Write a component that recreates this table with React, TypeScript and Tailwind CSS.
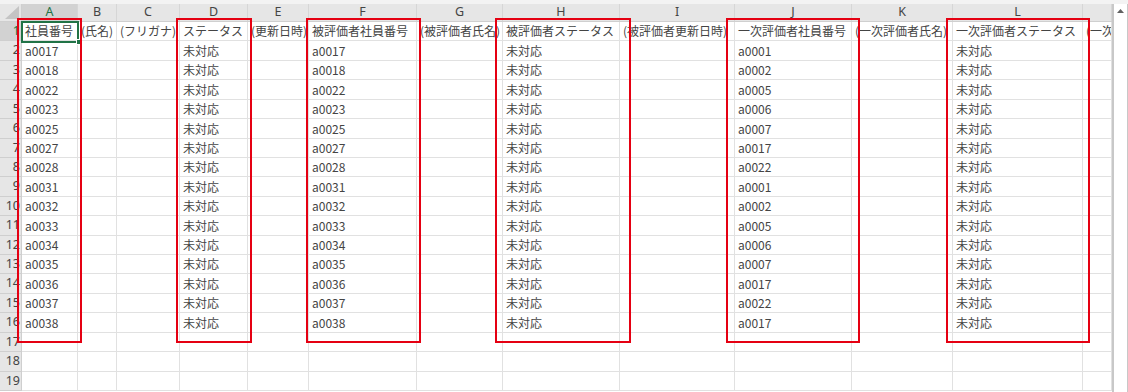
import React from "react";

type Col = { letter: string; label: string; w: string };

const COLS: Col[] = [
  { letter: "A", label: "A", w: "w-[56px]" },
  { letter: "B", label: "B", w: "w-[39px]" },
  { letter: "C", label: "C", w: "w-[63px]" },
  { letter: "D", label: "D", w: "w-[68px]" },
  { letter: "E", label: "E", w: "w-[61px]" },
  { letter: "F", label: "F", w: "w-[108px]" },
  { letter: "G", label: "G", w: "w-[86px]" },
  { letter: "H", label: "H", w: "w-[117px]" },
  { letter: "I", label: "I", w: "w-[115px]" },
  { letter: "J", label: "J", w: "w-[117px]" },
  { letter: "K", label: "K", w: "w-[101px]" },
  { letter: "L", label: "L", w: "w-[130px]" },
  { letter: "M", label: "", w: "flex-1" },
];

const ROW_H = [
  "h-[19px]", "h-[20px]", "h-[19px]", "h-[20px]", "h-[19px]",
  "h-[20px]", "h-[19px]", "h-[19px]", "h-[20px]", "h-[19px]",
  "h-[20px]", "h-[19px]", "h-[19px]", "h-[20px]", "h-[19px]",
  "h-[20px]", "h-[19px]", "h-[20px]", "h-[19px]",
];

const HEADER = [
  "社員番号",
  "(氏名)",
  "(フリガナ)",
  "ステータス",
  "(更新日時)",
  "被評価者社員番号",
  "(被評価者氏名)",
  "被評価者ステータス",
  "(被評価者更新日時)",
  "一次評価者社員番号",
  "(一次評価者氏名)",
  "一次評価者ステータス",
  "(一次評価者更新日時)",
];

const EMP = [
  "a0017", "a0018", "a0022", "a0023", "a0025", "a0027", "a0028", "a0031",
  "a0032", "a0033", "a0034", "a0035", "a0036", "a0037", "a0038",
];
const FIRST = [
  "a0001", "a0002", "a0005", "a0006", "a0007", "a0017", "a0022", "a0001",
  "a0002", "a0005", "a0006", "a0007", "a0017", "a0022", "a0017",
];

function rowData(r: number): string[] {
  if (r === 0) return HEADER;
  if (r <= 15) {
    const i = r - 1;
    return [
      EMP[i], "", "", "未対応", "", EMP[i], "", "未対応", "", FIRST[i], "", "未対応", "",
    ];
  }
  return Array(13).fill("");
}

const BOXES = [
  "left-[17px] w-[65px]",
  "left-[176px] w-[76px]",
  "left-[306px] w-[115px]",
  "left-[495px] w-[136px]",
  "left-[726px] w-[134px]",
  "left-[946px] w-[144px]",
];

export default function App() {
  return (
    <div
      className="relative w-[1128px] h-[392px] overflow-hidden bg-white flex flex-col"
      style={{ fontFamily: '"Noto Sans CJK JP", "Noto Sans", sans-serif' }}
    >
      <div className="h-[4px] bg-[#f3f3f3] shrink-0" />
      <div className="flex flex-1 min-h-0">
        {/* main grid */}
        <div className="w-[1112px] flex flex-col overflow-hidden">
          {/* column header */}
          <div className="flex h-[18px] shrink-0 bg-[#e6e6e6] border-b border-[#cfcfcf]">
            <div className="w-[22px] shrink-0 border-r border-[#cfcfcf] flex items-end justify-end">
              <svg width="17" height="14" viewBox="0 0 17 14" className="mb-[1px] mr-[1px]">
                <polygon points="16,0 16,13 2,13" fill="#c4c4c4" />
              </svg>
            </div>
            {COLS.map((c) => (
              <div
                key={c.letter}
                className={`${c.w} shrink-0 border-r border-[#d6d6d6] flex items-center justify-center text-[12.5px] ${
                  c.letter === "A" ? "bg-[#d2d2d2] text-[#217346]" : "text-[#444]"
                }`}
                style={{ fontFamily: '"Noto Sans", "Liberation Sans", sans-serif' }}
              >
                {c.label}
              </div>
            ))}
          </div>
          {/* rows */}
          {ROW_H.map((h, r) => {
            const data = rowData(r);
            return (
              <div key={r} className={`flex ${h} shrink-0`}>
                <div
                  className={`w-[22px] shrink-0 border-r border-b border-[#cfcfcf] flex items-center justify-end pr-[1px] text-[12.5px] ${
                    r === 0 ? "bg-[#d2d2d2] text-[#217346]" : "bg-[#e6e6e6] text-[#444]"
                  }`}
                  style={{ fontFamily: '"Noto Sans", "Liberation Sans", sans-serif' }}
                >
                  {r + 1}
                </div>
                {COLS.map((c, ci) => (
                  <div
                    key={c.letter}
                    className={`${c.w} shrink-0 border-r border-b border-[#e1e1e1] flex items-center pl-[3px] overflow-hidden whitespace-nowrap text-[12px] text-[#444] leading-none`}
                  >
                    {data[ci]}
                  </div>
                ))}
              </div>
            );
          })}
        </div>
        {/* scrollbar */}
        <div className="w-[16px] shrink-0 bg-white border-l-2 border-r border-[#c8c8c8] flex flex-col">
          <div className="h-[14px] flex items-center justify-center">
            <svg width="7" height="4" viewBox="0 0 7 4">
              <polygon points="0,4 7,4 3.5,0" fill="#606060" />
            </svg>
          </div>
        </div>
      </div>

      {/* selected cell A1 */}
      <div className="absolute left-[21px] top-[21px] w-[58px] h-[22px] border-2 border-[#217346]" />
      <div className="absolute left-[76px] top-[39px] w-[6px] h-[6px] bg-[#217346] border border-white" />

      {/* red highlight boxes */}
      {BOXES.map((b, i) => (
        <div key={i} className={`absolute top-[18px] h-[325px] border-2 border-[#e50012] ${b}`} />
      ))}
    </div>
  );
}
